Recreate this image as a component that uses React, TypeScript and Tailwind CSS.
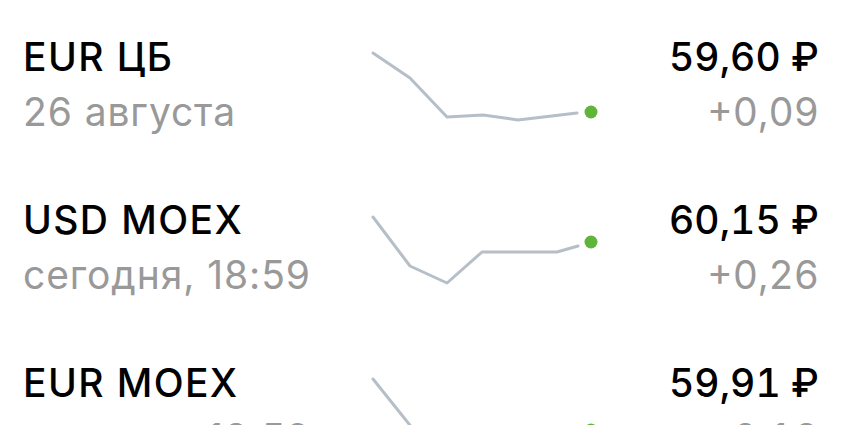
import React from "react";

type Rate = {
  name: string;
  date: string;
  price: string;
  change: string;
  points: [number, number][];
  dot: [number, number];
};

const rates: Rate[] = [
  {
    name: "EUR ЦБ",
    date: "26 августа",
    price: "59,60 ₽",
    change: "+0,09",
    points: [[8, 24], [45, 49], [82, 88], [118, 86], [153, 91], [212, 84]],
    dot: [226, 83],
  },
  {
    name: "USD MOEX",
    date: "сегодня, 18:59",
    price: "60,15 ₽",
    change: "+0,26",
    points: [[8, 25], [45, 74], [82, 91], [117, 60], [192, 60], [213, 54]],
    dot: [226, 50],
  },
  {
    name: "EUR MOEX",
    date: "сегодня, 18:59",
    price: "59,91 ₽",
    change: "+0,18",
    points: [[8, 24], [52, 79], [82, 97], [118, 92], [153, 87], [212, 78]],
    dot: [226, 75],
  },
];

const Sparkline = ({ points, dot }: { points: [number, number][]; dot: [number, number] }) => (
  <svg width="240" height="110" viewBox="0 0 240 110" className="shrink-0 overflow-visible">
    <polyline
      points={points.map((p) => p.join(",")).join(" ")}
      fill="none"
      stroke="#b6bec7"
      strokeWidth="3"
      strokeLinejoin="round"
      strokeLinecap="round"
    />
    <circle cx={dot[0]} cy={dot[1]} r="6.5" fill="#5fb43c" />
  </svg>
);

export default function App() {
  return (
    <div
      className="w-[850px] h-[425px] overflow-hidden bg-white pt-[29px] flex flex-col gap-[53px]"
      style={{ fontFamily: "Inter, 'Noto Sans', sans-serif" }}
    >
      {rates.map((r) => (
        <div key={r.name} className="flex items-start shrink-0">
          <div className="w-[365px] shrink-0 pl-[23px] text-[39px] leading-[55px]">
            <div className="font-medium text-black tracking-[1.4px]">{r.name}</div>
            <div className="text-[#999999] tracking-[0.9px]">{r.date}</div>
          </div>
          <Sparkline points={r.points} dot={r.dot} />
          <div className="flex-1 pr-[31px] text-right text-[39px] leading-[55px] tabular-nums">
            <div className="font-medium text-black">{r.price}</div>
            <div className="text-[#999999]">{r.change}</div>
          </div>
        </div>
      ))}
    </div>
  );
}
